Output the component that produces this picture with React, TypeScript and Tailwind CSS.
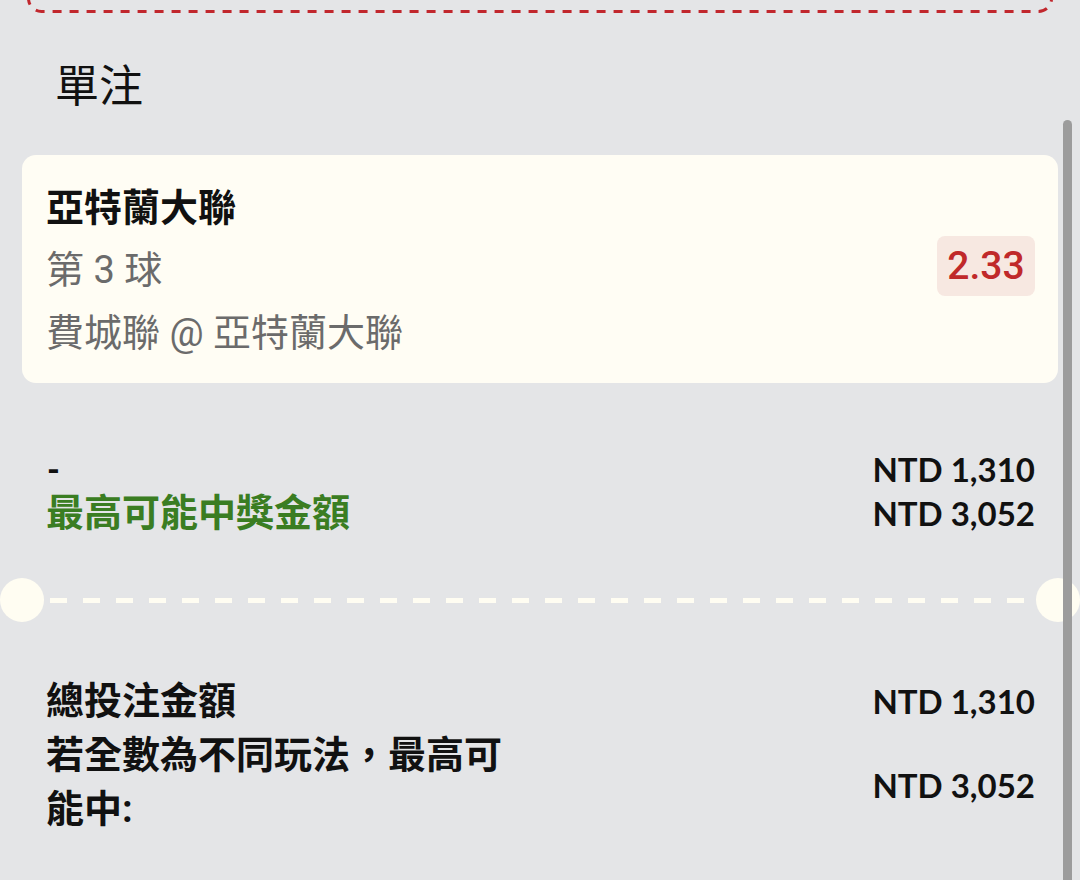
import React from 'react';

const cjk = "font-['Roboto','Noto_Sans_CJK_TC',sans-serif]";
const money = "font-['Lato',sans-serif] font-bold text-[33px] text-[#111] leading-none";

function Amount({ value, className = '' }: { value: string; className?: string }) {
  return <span className={`${money} ${className}`}>{value}</span>;
}

export default function App() {
  return (
    <div className={`relative min-h-[880px] overflow-hidden bg-[#e4e5e7] px-[22px] ${cjk}`}>
      {/* bottom edge of the previous dashed box */}
      <svg className="ml-[5px] block" width="1026" height="13" viewBox="0 0 1026 13">
        <rect
          x="1.5"
          y="-40"
          width="1023"
          height="51.5"
          rx="13"
          fill="none"
          stroke="#c1272d"
          strokeWidth="3"
          strokeDasharray="9 8"
        />
      </svg>

      <h2 className="ml-[33px] mt-[52px] text-[44px] leading-[44px] font-normal text-[#111]">單注</h2>

      <div className="mt-[46px] flex items-center justify-between rounded-[14px] bg-[#fffdf4] pl-[24px] pr-[23px] pt-[22px] pb-[18px]">
        <div className="text-[38px]">
          <div className="leading-[62px] font-bold text-[#111]">亞特蘭大聯</div>
          <div className="leading-[62px] text-[#6b6b6b]">第 3 球</div>
          <div className="leading-[64px] text-[#6b6b6b]">費城聯 @ 亞特蘭大聯</div>
        </div>
        <div className="mb-[10px] flex h-[60px] w-[98px] items-center justify-center rounded-[8px] bg-[#f7e8e1] text-[39px] font-medium leading-none text-[#c0292a]">
          2.33
        </div>
      </div>

      <div className="mt-[64px] pl-[24px] pr-[23px]">
        <div className="flex h-[44px] items-center justify-between">
          <span className="pl-[1px] text-[33px] font-bold leading-none text-[#111]">-</span>
          <Amount value="NTD 1,310" />
        </div>
        <div className="flex h-[44px] items-center justify-between">
          <span className="text-[38px] font-bold leading-[44px] text-[#3a7d22]">最高可能中獎金額</span>
          <Amount value="NTD 3,052" />
        </div>
      </div>

      <div className="-mx-[22px] mt-[43px] flex h-[44px] items-center">
        <div className="h-[44px] w-[44px] shrink-0 rounded-full bg-[#fffdf2]" />
        <div className="mx-[6px] h-[5px] flex-1 bg-[repeating-linear-gradient(90deg,#fffdf2_0px,#fffdf2_17px,transparent_17px,transparent_33px)]" />
        <div className="h-[44px] w-[44px] shrink-0 rounded-full bg-[#fffdf2]" />
      </div>

      <div className="mt-[52px] pl-[24px] pr-[23px] text-[38px] font-bold leading-[54px] text-[#111]">
        <div className="flex items-center justify-between">
          <span>總投注金額</span>
          <Amount value="NTD 1,310" />
        </div>
        <div className="flex items-center justify-between">
          <span className="w-[490px]">若全數為不同玩法，最高可能中:</span>
          <Amount value="NTD 3,052" className="pt-[6px]" />
        </div>
      </div>

      {/* scrollbar thumb */}
      <div className="absolute right-[8px] top-[120px] bottom-0 w-[9px] rounded-t-full bg-[#9c9c9c]" />
    </div>
  );
}
